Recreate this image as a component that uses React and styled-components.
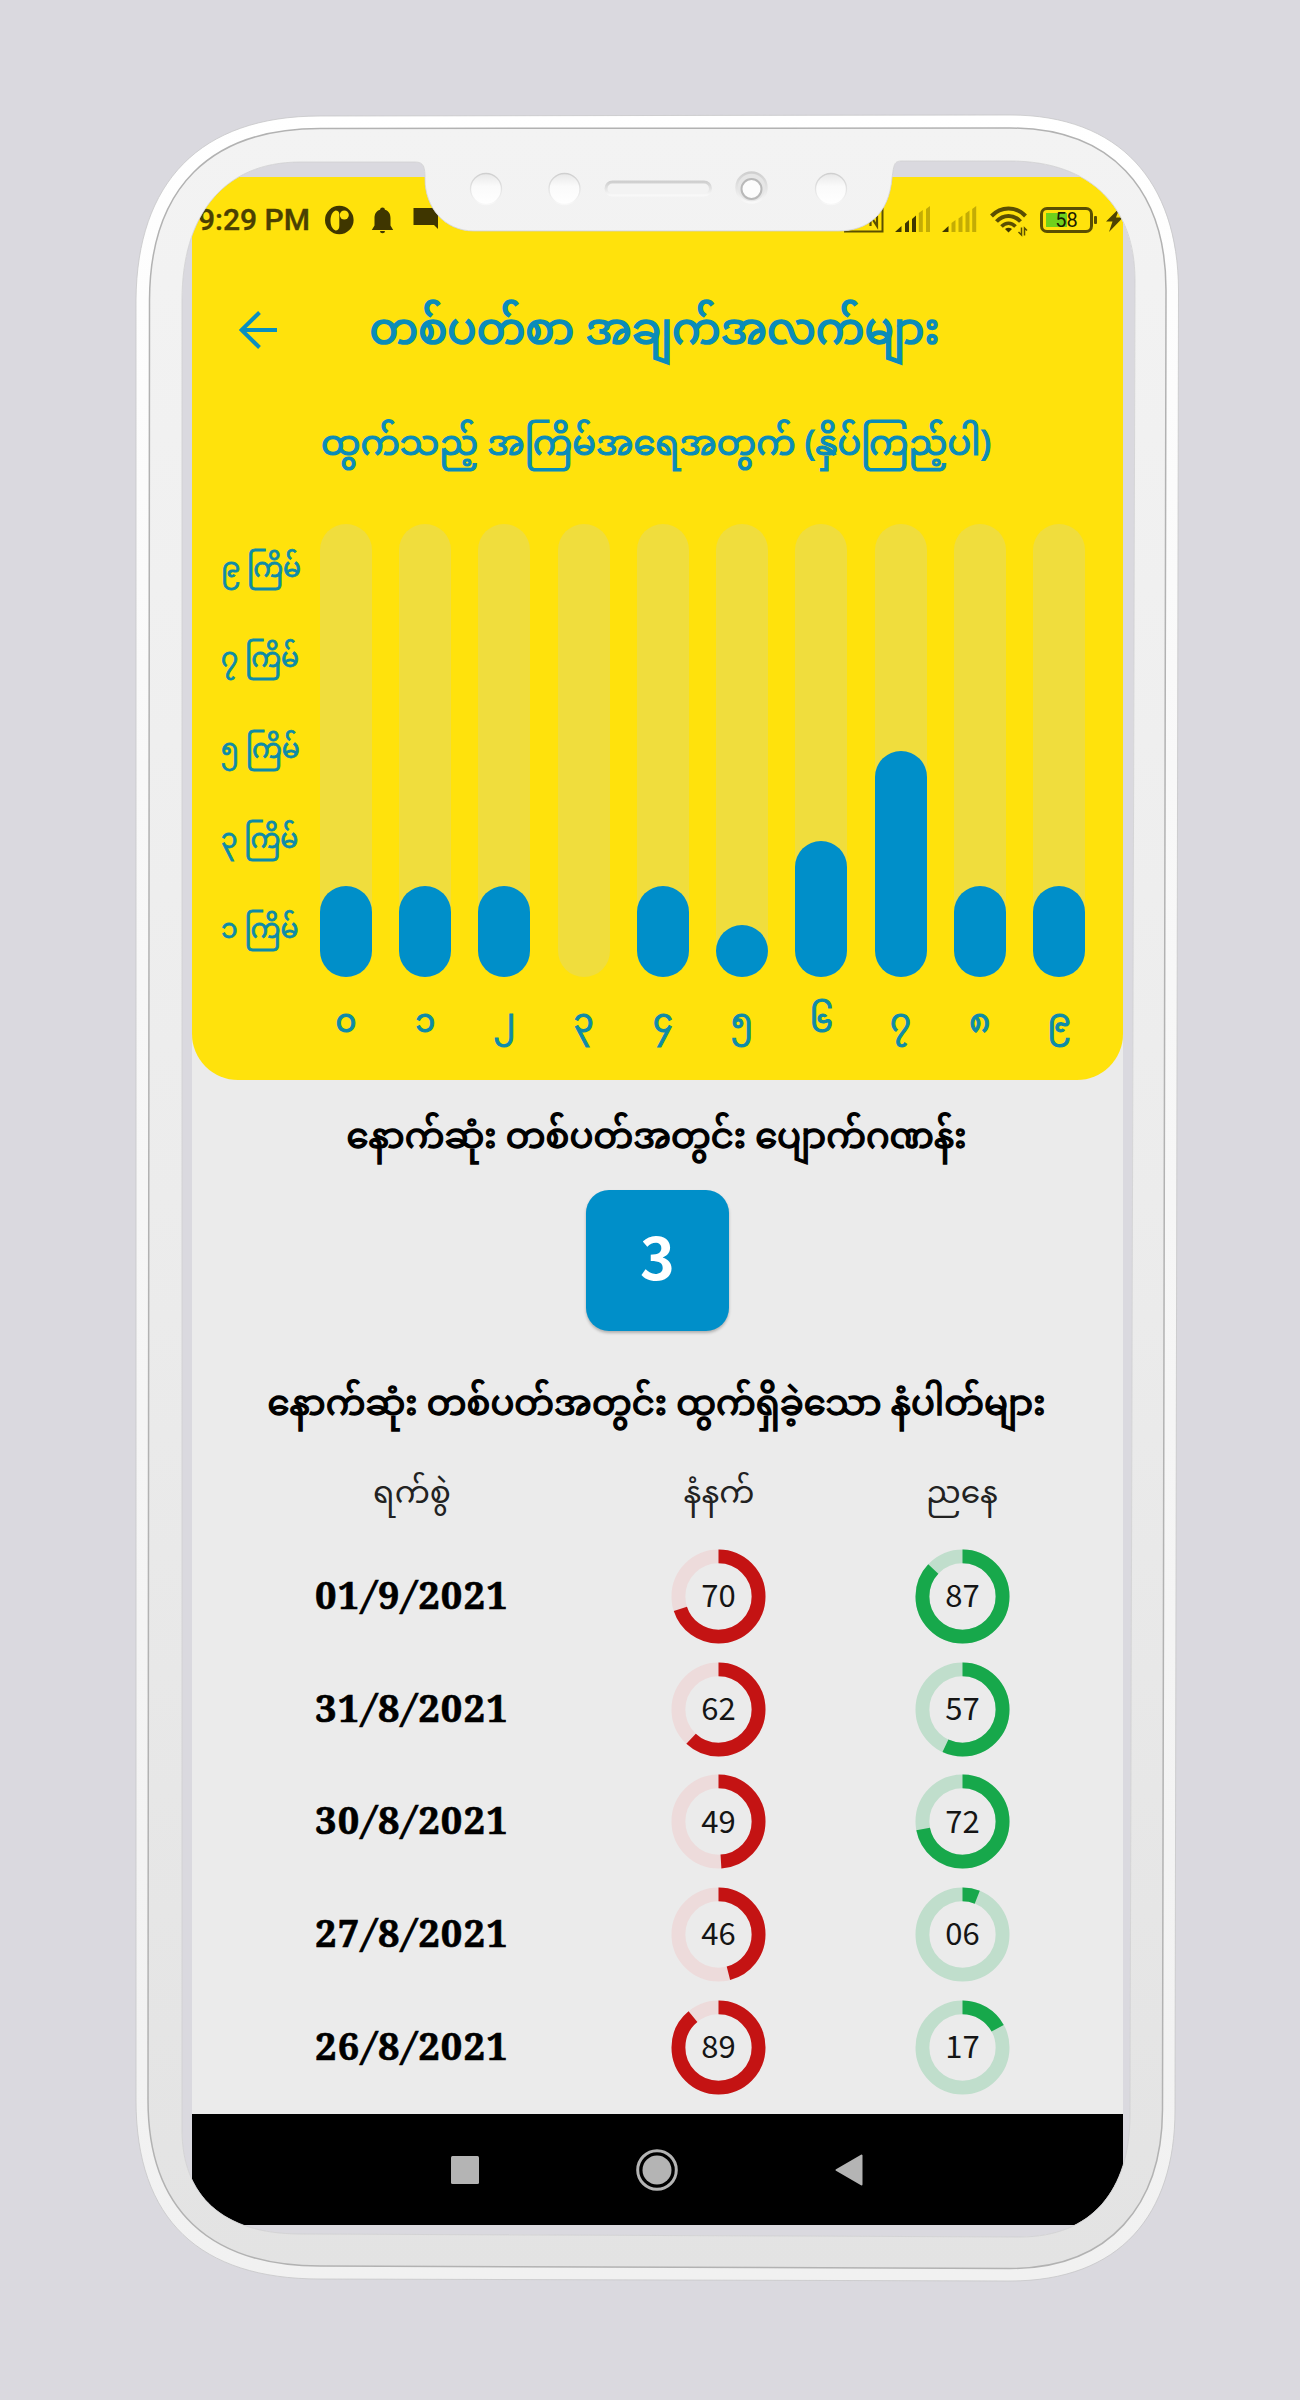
import React from "react";
import styled, { createGlobalStyle } from "styled-components";

const bars = [
  { digit: "၀", height: 91 },
  { digit: "၁", height: 91 },
  { digit: "၂", height: 91 },
  { digit: "၃", height: 0 },
  { digit: "၄", height: 91 },
  { digit: "၅", height: 52 },
  { digit: "၆", height: 136 },
  { digit: "၇", height: 226 },
  { digit: "၈", height: 91 },
  { digit: "၉", height: 91 },
];

const levels = ["၉ ကြိမ်", "၇ ကြိမ်", "၅ ကြိမ်", "၃ ကြိမ်", "၁ ကြိမ်"];

const results = [
  { date: "01/9/2021", morning: "70", evening: "87" },
  { date: "31/8/2021", morning: "62", evening: "57" },
  { date: "30/8/2021", morning: "49", evening: "72" },
  { date: "27/8/2021", morning: "46", evening: "06" },
  { date: "26/8/2021", morning: "89", evening: "17" },
];

function Ring({ value, color, track }) {
  return (
    <RingBox>
      <svg width="95" height="95" viewBox="0 0 96 96" fill="none">
        <circle cx="48" cy="48" r="40.5" stroke={track} strokeWidth="14" />
        <circle
          cx="48"
          cy="48"
          r="40.5"
          stroke={color}
          strokeWidth="14"
          pathLength="100"
          strokeDasharray={`${Number(value)} 100`}
          transform="rotate(-90 48 48)"
        />
      </svg>
      <RingValue>{value}</RingValue>
    </RingBox>
  );
}

function NoticeIcons() {
  return (
    <svg width="114" height="40" viewBox="324 200 114 40" fill="#3f3600">
      <circle cx="339.300" cy="220" r="14.300" />
      <path d="M335.500 210.500c2.500 0 3.800 1.500 3.800 4v11.500c0 2.800-1.300 4.500-3.800 4.500c-3.500-1.500-5-5.500-5-10s1.500-8.500 5-10Z" fill="#ffe20c" />
      <circle cx="344.300" cy="215" r="4.500" fill="#ffe20c" />
      <path d="M382.500 207.500a2.500 2.500 0 0 1 2.500 2.300c4 1.200 5.500 4.500 5.500 8.500v7.200l2.700 4.500h-21.400l2.700-4.500v-7.200c0-4 1.500-7.300 5.500-8.500a2.500 2.500 0 0 1 2.500-2.300ZM380 231h5a2.500 2.300 0 0 1-5 0Z" />
      <path d="M413.500 208h28v24.500l-7.500-7.500h-20.500Z" />
    </svg>
  );
}

function SignalIcons() {
  return (
    <svg width="192" height="40" viewBox="840 200 192 40" fill="none">
      <path d="M845 231.500h38.500v-24" stroke="#5a4e02" strokeWidth="2" />
      <path d="M871.500 226v-10l6.500 10v-10" stroke="#5a4e02" strokeWidth="2.200" />
      <g fill="#3f3600">
        <path d="M896 232l6.500-6v6ZM906 223.500l4-3.500v12h-4ZM913 219l4-3.500v16.500h-4Z" />
        <path d="M943 232l6.500-6v6Z" />
      </g>
      <g fill="#c3ac05">
        <path d="M919.800 213l4-3v22h-4ZM927 209l4-3v26h-4Z" />
        <path d="M952.500 223l4-3v12h-4ZM959.500 218.500l4-3v16.500h-4ZM966.500 213.500l4-3v21.500h-4ZM973.200 209l4-3v26h-4Z" />
      </g>
      <g transform="translate(0 .5)">
        <path d="M992.500 215.500C1002 205.500 1017 205.500 1026.500 215.500" stroke="#5a4e02" strokeWidth="4" />
        <path d="M997.500 221C1004.500 213.500 1014.500 213.500 1021.500 221" stroke="#5a4e02" strokeWidth="4" />
        <path d="M1002.500 226C1006.500 221.500 1012.500 221.500 1016.500 226" stroke="#5a4e02" strokeWidth="3.500" />
        <path d="M1006 228.500q3.500-2.500 7 0l-3.500 3.500Z" fill="#3f3600" />
        <path d="M1022.500 227v7.500l-3-3M1025.500 235v-7.500l2.500 2.500" stroke="#5a4e02" strokeWidth="1.500" />
      </g>
    </svg>
  );
}

function BoltIcon() {
  return (
    <svg width="17" height="26" viewBox="0 0 17 26">
      <path d="M13.500 1L0 14.500h6.500L3 25L17 10.500H10Z" fill="#4d4302" />
    </svg>
  );
}

const cavity =
  "M425 179C425 167 424 162 415 162H300C222 162 182 217 182 300V2130C182 2195 222 2234 300 2234L1020 2237C1092 2237 1130 2190 1130 2115L1135 280C1135 208 1092 161 1010 161H902C894 161 894 164 892 178C889 214 868 231 838 231H474C444 231 425 207 425 179Z";
const body =
  "M320 116L1010 115C1120 115 1178 182 1178.500 290L1175 2110C1175 2215 1120 2281 1010 2281L320 2279C200 2279 136 2220 136 2100V300C137 182 200 116 320 116Z";
const bevel =
  "M320 128.500L1010 128C1110 128 1166 188 1166 290L1162.500 2110C1162 2205 1110 2268.500 1010 2268.500L320 2266C210 2266 148 2210 148 2100L149.500 300C150 188 210 128.500 320 128.500Z";

function DeviceFrame() {
  return (
    <FrameSvg width="1300" height="2400" viewBox="0 0 1300 2400" fill="none">
      <defs>
        <linearGradient id="rim" x1="0" y1="0" x2="0" y2="1">
          <stop offset="0" stopColor="#ffffff" />
          <stop offset="0.3" stopColor="#f8f8f8" />
          <stop offset="1" stopColor="#f1f1f1" />
        </linearGradient>
        <linearGradient id="face" x1="0" y1="0" x2="0" y2="1">
          <stop offset="0" stopColor="#f3f3f3" />
          <stop offset="0.5" stopColor="#ececec" />
          <stop offset="1" stopColor="#e3e3e3" />
        </linearGradient>
        <linearGradient id="hole" x1="0" y1="0" x2="0" y2="1">
          <stop offset="0" stopColor="#e8e8e8" />
          <stop offset="0.4" stopColor="#fafafa" />
          <stop offset="1" stopColor="#ffffff" />
        </linearGradient>
        <linearGradient id="edge" x1="0" y1="0" x2="0" y2="1">
          <stop offset="0" stopColor="#cfcfcf" />
          <stop offset="1" stopColor="#f8f8f8" />
        </linearGradient>
      </defs>
      <path fillRule="evenodd" fill="url(#rim)" d={body + cavity} />
      <path d={body} stroke="#c6c6c8" strokeWidth="0.800" />
      <path fillRule="evenodd" fill="url(#face)" d={bevel + cavity} />
      <path d={bevel} stroke="#b2b2b2" strokeWidth="1.500" />
      <path d={cavity} stroke="#cfcfd1" strokeWidth="0.800" />
      {[486, 564.5, 831].map((cx) => (
        <circle key={cx} cx={cx} cy="189" r="15.500" fill="url(#hole)" stroke="url(#edge)" strokeWidth="1.300" />
      ))}
      <rect x="606" y="182" width="104.500" height="13" rx="6.500" fill="#f3f3f3" stroke="url(#edge)" strokeWidth="3" />
      <circle cx="751.500" cy="187.500" r="15" fill="#e6e6e6" stroke="url(#edge)" strokeWidth="2.500" />
      <circle cx="751.500" cy="189" r="10" fill="#fcfcfc" stroke="#b9b9b9" strokeWidth="2" />
    </FrameSvg>
  );
}

export default function App() {
  return (
    <Page>
      <GlobalStyle />
      <Screen>
        <ChartPanel>
          <StatusBar>
            <Clock>9:29 PM</Clock>
            <NoticeIcons />
            <StatusRight>
              <SignalIcons />
              <Battery>58</Battery>
              <BoltIcon />
            </StatusRight>
          </StatusBar>
          <TopBar>
            <BackButton aria-label="Back">
              <svg width="38" height="38" viewBox="0 0 38 38" fill="none" stroke="#0a8fbf" strokeWidth="4">
                <path d="M38 19H2.500M20.500 1.500L2.500 19l18 17.500" />
              </svg>
            </BackButton>
            <Title>တစ်ပတ်စာ အချက်အလက်များ</Title>
          </TopBar>
          <SubTitle>ထွက်သည့် အကြိမ်အရေအတွက် (နှိပ်ကြည့်ပါ)</SubTitle>
          <Chart>
            <Levels>
              {levels.map((level) => (
                <span key={level}>{level}</span>
              ))}
            </Levels>
            <Bars>
              {bars.map((bar) => (
                <BarColumn key={bar.digit}>
                  <Track>
                    <Fill style={{ height: bar.height }} />
                  </Track>
                  <Digit>{bar.digit}</Digit>
                </BarColumn>
              ))}
            </Bars>
          </Chart>
        </ChartPanel>
        <Content>
          <Heading>နောက်ဆုံး တစ်ပတ်အတွင်း ပျောက်ဂဏန်း</Heading>
          <MissingNumber>3</MissingNumber>
          <Heading>နောက်ဆုံး တစ်ပတ်အတွင်း ထွက်ရှိခဲ့သော နံပါတ်များ</Heading>
          <HeadRow>
            <span>ရက်စွဲ</span>
            <span>နံနက်</span>
            <span>ညနေ</span>
          </HeadRow>
          {results.map((row) => {
            const [day, month, year] = row.date.split("/");
            return (
              <Row key={row.date}>
                <DateText>
                  {day}
                  <i>/</i>
                  {month}
                  <i>/</i>
                  {year}
                </DateText>
                <Ring value={row.morning} color="#c41313" track="#eddbdb" />
                <Ring value={row.evening} color="#17a84b" track="#c0decc" />
              </Row>
            );
          })}
        </Content>
        <NavBar>
          <svg width="28" height="28">
            <rect width="28" height="28" rx="1.500" fill="#b4b4b4" />
          </svg>
          <svg width="42" height="42" fill="none">
            <circle cx="21" cy="21" r="19.300" stroke="#b4b4b4" strokeWidth="3" />
            <circle cx="21" cy="21" r="14.500" fill="#b4b4b4" />
          </svg>
          <svg width="28" height="32">
            <path d="M26.500 1.500v29L1.500 16Z" fill="#b4b4b4" stroke="#b4b4b4" strokeWidth="2" strokeLinejoin="round" />
          </svg>
        </NavBar>
      </Screen>
      <DeviceFrame />
    </Page>
  );
}

const GlobalStyle = createGlobalStyle`
  body {
    margin: 0;
    background: #dad9df;
  }
`;

const Page = styled.div`
  position: relative;
  box-sizing: border-box;
  width: 1300px;
  height: 2400px;
  padding: 177px 177px 0 192px;
  font-family: "Noto Sans Myanmar", "Noto Sans", sans-serif;
`;

const Screen = styled.main`
  display: flex;
  flex-direction: column;
  width: 931px;
  height: 2048px;
  background: #ebebeb;
`;

const ChartPanel = styled.section`
  height: 903px;
  background: #ffe20c;
  border-radius: 0 0 46px 46px;
  color: #0a8cb9;
`;

const StatusBar = styled.div`
  display: flex;
  align-items: center;
  height: 86px;
  padding-left: 6px;
`;

const Clock = styled.span`
  width: 126px;
  color: #4a4002;
  font: 500 30px/40px Roboto, sans-serif;
  white-space: nowrap;
  -webkit-text-stroke: 0.4px currentColor;
`;

const StatusRight = styled.div`
  display: flex;
  align-items: center;
  margin-left: auto;
`;

const Battery = styled.div`
  position: relative;
  box-sizing: border-box;
  width: 53px;
  height: 26px;
  margin: 0 13px 0 9px;
  border: 3px solid #5a4e02;
  border-radius: 7px;
  background: linear-gradient(#6fd11c, #6fd11c) 3px 3px / 21px 14px no-repeat;
  color: #1c1c00;
  font: 400 20px/21px Roboto, sans-serif;
  text-align: center;
  &::after {
    content: "";
    position: absolute;
    right: -7px;
    top: 6px;
    width: 3px;
    height: 8px;
    border-radius: 1px;
    background: #5a4e02;
  }
`;

const TopBar = styled.header`
  display: grid;
  grid-template-columns: 86px 1fr 92px;
  align-items: center;
  height: 134px;
`;

const BackButton = styled.button`
  padding: 0 2px 0 47px;
  border: none;
  background: none;
  line-height: 0;
`;

const Title = styled.h1`
  margin: 0;
  padding-top: 7px;
  font-size: 43.3px;
  font-weight: 400;
  line-height: 80px;
  text-align: center;
  -webkit-text-stroke: 1.7px currentColor;
`;

const SubTitle = styled.p`
  box-sizing: border-box;
  height: 127px;
  margin: 0;
  padding: 3px 3px 0 0;
  font-size: 35.1px;
  line-height: 94px;
  text-align: center;
  -webkit-text-stroke: 1.2px currentColor;
`;

const Chart = styled.div`
  display: flex;
  padding: 0 38px 0 29px;
`;

const Levels = styled.div`
  display: flex;
  flex-direction: column;
  width: 99px;
  padding-top: 2px;
  color: #0d8ba8;
  font-size: 26.6px;
  line-height: 90.3px;
  white-space: nowrap;
  -webkit-text-stroke: 0.8px currentColor;
`;

const Bars = styled.div`
  display: flex;
  flex: 1;
  justify-content: space-between;
`;

const BarColumn = styled.div`
  width: 52px;
`;

const Track = styled.div`
  display: flex;
  align-items: flex-end;
  height: 453px;
  border-radius: 26px;
  background: #f0dd3d;
`;

const Fill = styled.div`
  width: 100%;
  border-radius: 26px;
  background: #008fc9;
`;

const Digit = styled.div`
  color: #0d8ba8;
  font-size: 32px;
  line-height: 97px;
  text-align: center;
  -webkit-text-stroke: 1.1px currentColor;
`;

const Content = styled.section`
  flex: 1;
`;

const Heading = styled.h2`
  box-sizing: border-box;
  height: 110px;
  margin: 0;
  padding: 5px 2px 0 0;
  color: #000;
  font-size: 35.4px;
  font-weight: 400;
  line-height: 110px;
  text-align: center;
  -webkit-text-stroke: 1.3px currentColor;
`;

const MissingNumber = styled.div`
  width: 143px;
  height: 141px;
  margin: 0 auto 16px;
  border-radius: 23px;
  background: #008fc9;
  box-shadow: 0 2px 3px #00000040;
  color: #fff;
  font: 700 59px/129px "Noto Sans CJK JP", sans-serif;
  text-align: center;
`;

const HeadRow = styled.div`
  display: grid;
  grid-template-columns: 440px 174px 312px;
  height: 83px;
  color: #222;
  font-size: 31.3px;
  line-height: 78px;
  text-align: center;
`;

const Row = styled.div`
  display: grid;
  grid-template-columns: 440px 173px 315px;
  align-items: center;
  justify-items: center;
  height: 112.700px;
`;

const DateText = styled.span`
  padding-bottom: 5px;
  color: #000;
  font: 700 38px/60px "Noto Serif", serif;
  letter-spacing: 1.2px;
  -webkit-text-stroke: 0.6px currentColor;
  i {
    margin: 0 2.700px;
  }
`;

const RingBox = styled.div`
  display: grid;
  place-items: center;
  > * {
    grid-area: 1 / 1;
  }
`;

const RingValue = styled.span`
  padding-bottom: 4px;
  color: #151515;
  font: 400 31px/40px "Noto Sans CJK JP", sans-serif;
`;

const NavBar = styled.nav`
  display: flex;
  align-items: center;
  justify-content: center;
  gap: 157px;
  height: 111px;
  padding-right: 2px;
  background: #000;
`;

const FrameSvg = styled.svg`
  position: absolute;
  inset: 0;
`;
